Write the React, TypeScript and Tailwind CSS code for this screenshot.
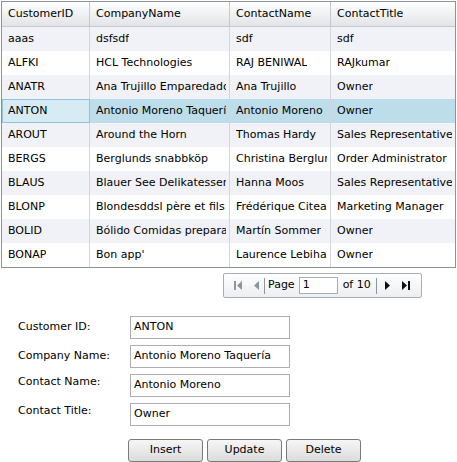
import React from "react";

const rows = [
  ["aaas", "dsfsdf", "sdf", "sdf"],
  ["ALFKI", "HCL Technologies", "RAJ BENIWAL", "RAJkumar"],
  ["ANATR", "Ana Trujillo Emparedados y helados", "Ana Trujillo", "Owner"],
  ["ANTON", "Antonio Moreno Taquería", "Antonio Moreno", "Owner"],
  ["AROUT", "Around the Horn", "Thomas Hardy", "Sales Representative"],
  ["BERGS", "Berglunds snabbköp", "Christina Berglund", "Order Administrator"],
  ["BLAUS", "Blauer See Delikatessen", "Hanna Moos", "Sales Representative"],
  ["BLONP", "Blondesddsl père et fils", "Frédérique Citeaux", "Marketing Manager"],
  ["BOLID", "Bólido Comidas preparadas", "Martín Sommer", "Owner"],
  ["BONAP", "Bon app'", "Laurence Lebihan", "Owner"],
];

const headers = ["CustomerID", "CompanyName", "ContactName", "ContactTitle"];
const widths = ["w-[88px]", "w-[140px]", "w-[101px]", "flex-1"];

function Tri({ dir, color }: { dir: "l" | "r"; color: string }) {
  return (
    <svg width="5" height="9" viewBox="0 0 5 9">
      {dir === "l" ? <polygon points="5,0 5,9 0,4.5" fill={color} /> : <polygon points="0,0 0,9 5,4.5" fill={color} />}
    </svg>
  );
}

export default function App() {
  return (
    <div className="w-[457px] h-[462px] bg-white text-[11px] text-black relative" style={{ fontFamily: '"DejaVu Sans", Verdana, sans-serif' }}>
      <div className="pt-px pl-px pr-px">
        <div className="border border-[#8c939b] w-[455px]">
          <div className="flex h-[25px] bg-gradient-to-b from-white to-[#e2e4e7] border-b border-[#c5c9ce]">
            {headers.map((h, i) => (
              <div key={h} className={`${widths[i]} ${i < 3 ? "border-r border-[#c5c9ce]" : ""} flex items-center pl-[6px] pr-[3px] min-w-0`}>
                <span className="overflow-hidden whitespace-nowrap">{h}</span>
              </div>
            ))}
          </div>
          {rows.map((r, ri) => {
            const sel = ri === 3;
            const bg = sel ? "bg-[#bcdde9]" : ri % 2 === 0 ? "bg-[#f0f2f7]" : "bg-white";
            return (
              <div key={ri} className={`flex h-[24px] ${bg}`}>
                {r.map((c, ci) => (
                  <div
                    key={ci}
                    className={`${widths[ci]} ${ci < 3 ? "border-r border-[#d3d6db]" : ""} ${sel && ci === 0 ? "bg-[#d6ebf3] outline outline-1 -outline-offset-1 outline-[#8fc3d8]" : ""} flex items-center pl-[6px] pr-[3px] min-w-0`}
                  >
                    <span className="overflow-hidden whitespace-nowrap">{c}</span>
                  </div>
                ))}
              </div>
            );
          })}
        </div>
      </div>

      <div className="flex justify-end pr-[35px] mt-[5px]">
        <div className="flex items-center h-[25px] w-[199px] border border-[#a9aeb5] rounded-[2px] bg-gradient-to-b from-white to-[#eceef1] pl-[10px]">
          <div className="flex items-center">
            <span className="w-[2px] h-[9px] bg-[#8f959c] mr-[1px]" />
            <Tri dir="l" color="#8f959c" />
          </div>
          <div className="ml-[12px]"><Tri dir="l" color="#8f959c" /></div>
          <span className="ml-[5px] w-px h-[16px] bg-[#8f959c]" />
          <span className="ml-[3px]">Page</span>
          <div className="ml-[4px] w-[39px] h-[17px] border border-[#a9aeb5] bg-white flex items-center pl-[3px]">1</div>
          <span className="ml-[5px]">of 10</span>
          <span className="ml-[5px] w-px h-[16px] bg-[#8f959c]" />
          <div className="ml-[8px]"><Tri dir="r" color="#111" /></div>
          <div className="flex items-center ml-[12px]">
            <Tri dir="r" color="#111" />
            <span className="w-[2px] h-[9px] bg-[#111] ml-[1px]" />
          </div>
        </div>
      </div>

      <div className="mt-[18px] grid grid-cols-[112px_160px] gap-y-[6px] pl-[18px]">
        {[
          ["Customer ID:", "ANTON", "pt-[3px]"],
          ["Company Name:", "Antonio Moreno Taquería", "pt-[3px]"],
          ["Contact Name:", "Antonio Moreno", "pt-0"],
          ["Contact Title:", "Owner", "pt-0"],
        ].map(([l, v, p]) => (
          <React.Fragment key={l}>
            <div className={p}>{l}</div>
            <div className="h-[23px] border border-[#abadb3] bg-white flex items-center pl-[3px] whitespace-nowrap overflow-hidden">{v}</div>
          </React.Fragment>
        ))}
      </div>

      <div className="flex gap-[4px] pl-[128px] mt-[13px]">
        {["Insert", "Update", "Delete"].map((b) => (
          <button key={b} className="w-[75px] h-[23px] border border-[#7a7a7a] rounded-[3px] bg-gradient-to-b from-[#f6f6f6] to-[#dcdcdc] flex items-center justify-center">
            {b}
          </button>
        ))}
      </div>
    </div>
  );
}
